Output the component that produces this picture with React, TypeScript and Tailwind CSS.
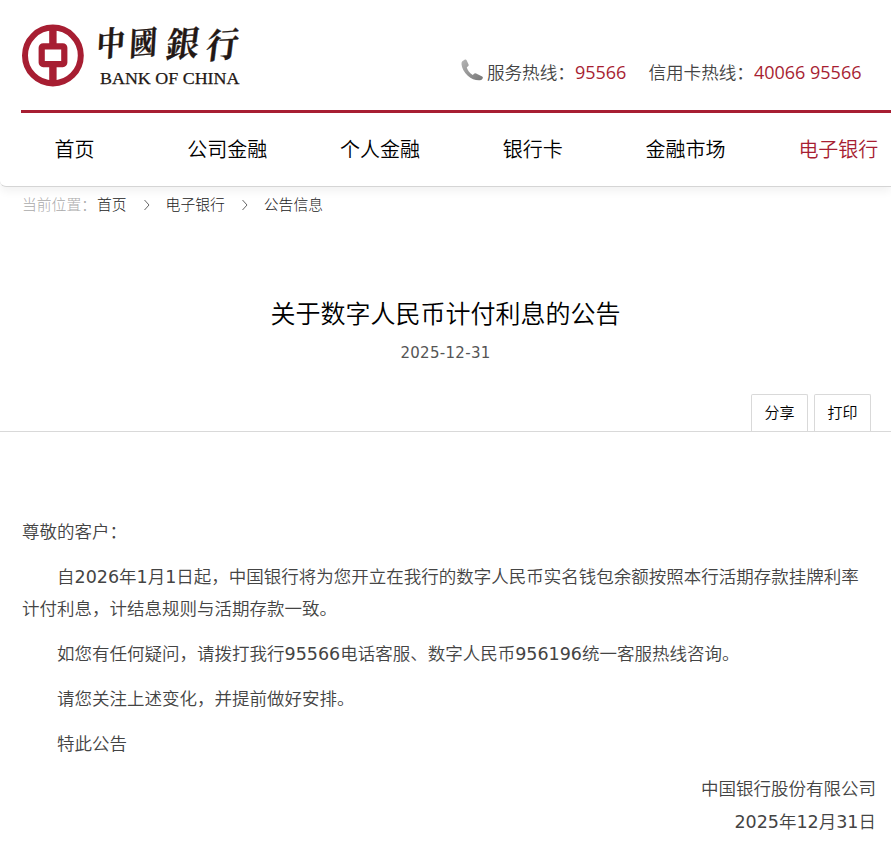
import { clsx } from "clsx";

const navItems = ["首页", "公司金融", "个人金融", "银行卡", "金融市场", "电子银行"];

const crumbs = ["首页", "电子银行", "公告信息"];

const paragraphs = [
  "自2026年1月1日起，中国银行将为您开立在我行的数字人民币实名钱包余额按照本行活期存款挂牌利率计付利息，计结息规则与活期存款一致。",
  "如您有任何疑问，请拨打我行95566电话客服、数字人民币956196统一客服热线咨询。",
  "请您关注上述变化，并提前做好安排。",
  "特此公告",
];

// Chinese runs are set in a light cut, figures stay at regular weight
const MixedText = ({ text }: { text: string }) => (
  <>
    {text.split(/(\d+)/).map((part, i) =>
      i % 2 === 1 ? (
        <span key={i} className="font-normal">
          {part}
        </span>
      ) : (
        part
      )
    )}
  </>
);

const Logo = () => (
  <svg className="block shrink-0 overflow-visible" width="220" height="64" viewBox="0 0 220 64" role="img">
    <g fill="none" stroke="#a71e32">
      <circle cx="31.9" cy="31.5" r="27.9" strokeWidth="6" />
      <path d="M31.9 4v16M31.9 42v17" strokeWidth="7.4" />
      <rect x="20.7" y="22.3" width="22.6" height="17.8" rx="1.5" strokeWidth="6.2" />
    </g>
    <g
      fill="#231815"
      stroke="#231815"
      strokeWidth=".3"
      fontFamily="'Noto Serif CJK SC', 'Noto Sans CJK TC', sans-serif"
      fontWeight="700"
      fontSize="30"
    >
      <text transform="translate(75 33) rotate(-5) skewX(-8) scale(.95 1.12)">中</text>
      <text transform="translate(108 32) rotate(-5) skewX(-8) scale(.92 1.08)">國</text>
      <text transform="translate(144 34) rotate(-5) skewX(-12) scale(1.1 1.15)">銀</text>
      <text transform="translate(184 35) rotate(-5) skewX(-12) scale(1.08 1.15)">行</text>
    </g>
    <text
      x="79"
      y="59.5"
      fill="#231815"
      stroke="#231815"
      strokeWidth=".25"
      fontFamily="'Liberation Serif', serif"
      fontSize="16.8"
      textLength="139.5"
      lengthAdjust="spacingAndGlyphs"
    >
      BANK OF CHINA
    </text>
  </svg>
);

const PhoneIcon = () => (
  <svg className="mt-[10px] mr-[3px] shrink-0" width="23" height="23" viewBox="0 0 23 23">
    <defs>
      <linearGradient id="handset" x1="0" y1="0" x2="1" y2="1">
        <stop offset="0" stopColor="#b5b5b5" />
        <stop offset="1" stopColor="#777" />
      </linearGradient>
    </defs>
    <path
      fill="url(#handset)"
      d="M1.3 2.2 4 .6q1-.5 1.6.6l2 4.3q.4 1-.5 1.7L5.8 8.3q.7 4.3 5.9 7.7l1.7-1.4q.8-.7 1.7-.2l6.1 3q1 .5.6 1.5l-.5 1q-.8 1.3-2.8 1.3-6.5.2-11.7-4.5Q1.1 11.5.5 5.200.3 3 1.300 2.200Z"
    />
  </svg>
);

const Header = () => (
  <header className="relative h-[187px] rounded-bl-md border-b border-[#d5d5d5] bg-white shadow-[0_4px_10px_rgba(0,0,0,0.06)]">
    <div className="ml-[21px] flex h-[113px] items-start justify-between border-b-3 border-[#a71e32] pt-6 pr-[29.500px]">
      <Logo />
      <div className="flex pt-[25px] font-['Open_Sans','Noto_Sans_CJK_SC',sans-serif] text-[17.6px] leading-[46px] font-[350] whitespace-nowrap text-[#444]">
        <PhoneIcon />
        <span className="w-[88px]">服务热线：</span>
        <span className="w-[73.500px] text-lg leading-[46px] font-normal text-[#a71e32]">95566</span>
        <span className="w-[105.500px]">信用卡热线：</span>
        <span className="text-lg leading-[46px] font-normal text-[#a71e32]">40066 95566</span>
      </div>
    </div>
    <nav className="-ml-0.5 flex overflow-hidden pt-px text-xl leading-[72px] font-[350] text-black">
      {navItems.map((item) => (
        <a
          key={item}
          className={clsx("w-[152.800px] shrink-0 text-center", item === "电子银行" && "text-[#a71e32]")}
        >
          {item}
        </a>
      ))}
    </nav>
  </header>
);

const Breadcrumb = () => (
  <div className="flex h-9 pl-[22px] text-[14.800px] leading-[35px] font-light text-[#222]">
    <span className="w-[75px] text-[#aaa]">当前位置：</span>
    {crumbs.map((crumb, i) => (
      <span key={crumb} className="flex h-[35px] items-center">
        {i > 0 && (
          <svg className="mr-4 ml-[17px]" width="6" height="12" viewBox="0 0 6 12" fill="none" stroke="#666">
            <path d="m.5 1 4.500 5-4.500 5" />
          </svg>
        )}
        {crumb}
      </span>
    ))}
  </div>
);

export default function App() {
  return (
    <div className="h-[849px] w-full overflow-hidden bg-white font-['DejaVu_Sans','Noto_Sans_CJK_SC',sans-serif]">
      <Header />
      <Breadcrumb />

      <div className="border-b border-[#d9d9d9] pt-[72px]">
        <h1 className="text-center text-[25px] leading-10 font-[350] text-black">关于数字人民币计付利息的公告</h1>
        <p className="pt-[6px] text-center text-[15px] leading-6 tracking-[0.3px] text-[#555]">2025-12-31</p>
        <div className="mt-[29px] flex justify-end gap-1.5 pr-5 text-[15px] leading-9 font-[350] text-black">
          {["分享", "打印"].map((label) => (
            <button
              key={label}
              className="h-[37px] w-[57px] rounded-t-xs border border-b-0 border-[#d9d9d9] text-center"
            >
              {label}
            </button>
          ))}
        </div>
      </div>

      <article className="flex flex-col gap-[13px] pt-[84px] pr-[15px] pl-[22px] text-[17.500px] leading-8 font-[350] text-[#444]">
        <p>尊敬的客户：</p>
        {paragraphs.map((text) => (
          <p key={text} className="indent-[35px]">
            <MixedText text={text} />
          </p>
        ))}
        <div className="text-right leading-[32.500px]">
          <p>中国银行股份有限公司</p>
          <p>
            <MixedText text="2025年12月31日" />
          </p>
        </div>
      </article>
    </div>
  );
}
